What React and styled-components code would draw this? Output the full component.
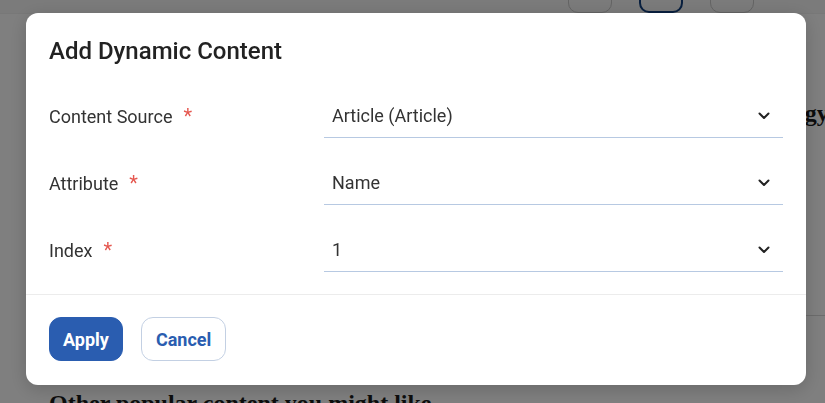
import React from 'react'
import styled, { createGlobalStyle } from 'styled-components'

const GlobalStyle = createGlobalStyle`
  html, body {
    margin: 0;
    padding: 0;
    background: #fff;
  }
  body {
    font-family: 'Liberation Serif', serif;
    overflow: hidden;
  }
`

const Page = styled.div`
  width: 825px;
  height: 403px;
  overflow: hidden;
  background: #fff;
`

const TopBar = styled.div`
  height: 13px;
  display: flex;
  align-items: flex-end;
  gap: 27px;
  padding-left: 568px;
  background: #f6f6f6;
  border-bottom: 1px solid #f0f0f0;
`

const TopButton = styled.div`
  flex: 0 0 auto;
  width: 44px;
  height: 34px;
  box-sizing: border-box;
  border-radius: 10px;
  border: ${(p) => (p.primary ? '2px solid #123f7e' : '1px solid #c8c8c8')};
`

const PageBody = styled.div`
  padding: 0 0 0 49px;
`

const PageHeading = styled.h2`
  margin: 86px 0 0;
  font-size: 24px;
  font-weight: 700;
  color: #1a1a1a;
  white-space: nowrap;
  text-indent: 693px;
`

const Rule = styled.div`
  margin-top: 188px;
  margin-left: 700px;
  border-top: 1px solid #d8d8d8;
`

const SectionHeading = styled.h2`
  margin: 74px 0 0;
  font-size: 24px;
  font-weight: 700;
  color: #1a1a1a;
  white-space: nowrap;
`

const Overlay = styled.div`
  position: fixed;
  inset: 0;
  background: rgba(0, 0, 0, 0.5);
  display: flex;
  align-items: flex-start;
  padding: 13px 0 0 26px;
`

const Modal = styled.div`
  width: 780px;
  background: #fff;
  border-radius: 12px;
  box-shadow: 0 4px 18px rgba(0, 0, 0, 0.18);
  font-family: Roboto, 'Noto Sans', sans-serif;
  color: #333;
`

const ModalBody = styled.div`
  padding: 23px 23px 22px;
`

const Title = styled.h3`
  margin: 0 0 28px;
  font-size: 24px;
  line-height: 30px;
  font-weight: 500;
  color: #222;
`

const Fields = styled.div`
  display: flex;
  flex-direction: column;
  gap: 23px;
`

const Row = styled.div`
  display: grid;
  grid-template-columns: 275px 1fr;
  align-items: center;
`

const Label = styled.div`
  font-size: 18px;
  color: #333;
  display: flex;
  align-items: center;
  gap: 11px;
`

const Required = styled.span`
  color: #e5574f;
  font-size: 20px;
  line-height: 1;
`

const Select = styled.div`
  height: 44px;
  box-sizing: border-box;
  display: flex;
  align-items: center;
  justify-content: space-between;
  padding: 0 13px 0 8px;
  border-bottom: 1px solid #b7c9e2;
  font-size: 18px;
  color: #333;
`

const Chevron = () => (
  <svg width="12" height="8" viewBox="0 0 12 8" aria-hidden="true">
    <path d="M1.5 1.5 6 6l4.5-4.5" fill="none" stroke="#222" strokeWidth="2" strokeLinecap="round" strokeLinejoin="round" />
  </svg>
)

const Footer = styled.div`
  border-top: 1px solid #ececec;
  padding: 22px 23px 24px;
  display: flex;
  gap: 18px;
`

const Button = styled.button`
  height: 44px;
  padding: 0 ${(p) => (p.primary ? 13 : 14)}px;
  border-radius: 12px;
  font-family: Roboto, 'Noto Sans', sans-serif;
  font-size: 18px;
  font-weight: 700;
  cursor: pointer;
  background: ${(p) => (p.primary ? '#2a5db0' : '#fff')};
  color: ${(p) => (p.primary ? '#fff' : '#2a5db0')};
  border: 1px solid ${(p) => (p.primary ? '#2a5db0' : '#c3d0e3')};
`

const fields = [
  { label: 'Content Source', value: 'Article (Article)' },
  { label: 'Attribute', value: 'Name' },
  { label: 'Index', value: '1' },
]

export default function App() {
  return (
    <>
      <GlobalStyle />
      <Page>
        <TopBar>
          <TopButton />
          <TopButton primary />
          <TopButton />
        </TopBar>
        <PageBody>
          <PageHeading>Strategy</PageHeading>
          <Rule />
          <SectionHeading>Other popular content you might like</SectionHeading>
        </PageBody>
      </Page>

      <Overlay>
        <Modal>
          <ModalBody>
            <Title>Add Dynamic Content</Title>
            <Fields>
              {fields.map((f) => (
                <Row key={f.label}>
                  <Label>
                    {f.label}
                    <Required>*</Required>
                  </Label>
                  <Select>
                    <span>{f.value}</span>
                    <Chevron />
                  </Select>
                </Row>
              ))}
            </Fields>
          </ModalBody>
          <Footer>
            <Button primary>Apply</Button>
            <Button>Cancel</Button>
          </Footer>
        </Modal>
      </Overlay>
    </>
  )
}
